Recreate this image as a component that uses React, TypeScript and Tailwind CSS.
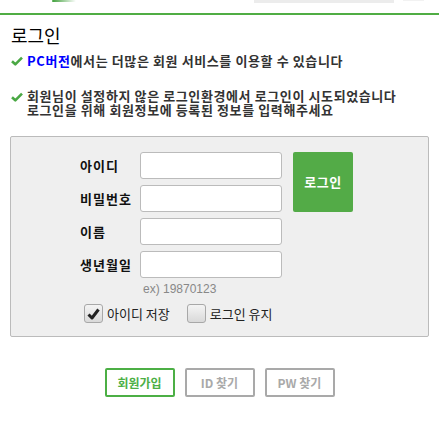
import React from "react";

const ko = "font-['Noto_Sans_CJK_KR','Noto_Sans',sans-serif]";

function GreenCheck() {
  return (
    <svg width="12" height="10" viewBox="0 0 12 10" className="shrink-0">
      <path d="M1 5.2 L4.3 8.3 L11 1.6" fill="none" stroke="#4aa844" strokeWidth="2.6" strokeLinejoin="round" />
    </svg>
  );
}

function Box({ checked, label }: { checked: boolean; label: string }) {
  return (
    <label className="flex items-center gap-[4px]">
      <span className="flex h-[19px] w-[19px] items-center justify-center rounded-[3px] border border-[#a8a8a8] bg-[linear-gradient(180deg,#f4f4f4,#d9d9d9)]">
        {checked && (
          <svg width="13" height="12" viewBox="0 0 13 12">
            <path d="M1.5 6.5 L5 10 L11.5 1.5" fill="none" stroke="#222" strokeWidth="3" strokeLinejoin="round" />
          </svg>
        )}
      </span>
      <span className={`${ko} text-[13px] leading-none text-[#222]`}>{label}</span>
    </label>
  );
}

function Field({ label }: { label: string }) {
  return (
    <div className="flex items-center">
      <span className={`${ko} w-[60px] text-[13px] font-bold tracking-[1px] text-[#111]`}>{label}</span>
      <input className="h-[27px] w-[142px] rounded-[3px] border border-[#bbb] bg-white outline-none" />
    </div>
  );
}

export default function App() {
  return (
    <div className={`h-[432px] w-[439px] overflow-hidden bg-white ${ko}`}>
      <div className="relative h-[13px]">
        <div className="absolute left-[52px] top-0 h-[2px] w-[24px] rounded-full bg-[linear-gradient(90deg,#3f9f3a,rgba(80,173,68,0))]" />
        <div className="absolute left-[254px] top-0 h-[3px] w-[140px] bg-[#ececec]" />
        <div className="absolute left-[403px] top-0 h-[1px] w-[21px] bg-[#f2f2f2]" />
      </div>
      <div className="h-[2px] bg-[#50ad44]" />

      <div className="px-[11px]">
        <h1 className="mt-[10px] text-[18px] font-normal leading-[20px] text-black">로그인</h1>

        <div className="mt-[9px] flex items-center gap-[4px] text-[13px] font-bold leading-[14px] tracking-[0.6px] text-[#333]">
          <GreenCheck />
          <p>
            <span className="text-[#0000ff]">PC버전</span>에서는 더많은 회원 서비스를 이용할 수 있습니다
          </p>
        </div>

        <div className="mt-[21px] flex items-start gap-[4px] text-[13px] font-bold leading-[14px] tracking-[0.6px] text-[#333]">
          <div className="pt-[3px]">
            <GreenCheck />
          </div>
          <p>
            회원님이 설정하지 않은 로그인환경에서 로그인이 시도되었습니다
            <br />
            로그인을 위해 회원정보에 등록된 정보를 입력해주세요
          </p>
        </div>
      </div>

      <div className="mx-[10px] mt-[19px] w-[419px] rounded-[2px] border border-[#bbb] bg-[#efefef] pb-[13px] pl-[69px] pt-[15px]">
        <div className="flex gap-[11px]">
          <div className="flex flex-col gap-[6px]">
            <Field label="아이디" />
            <Field label="비밀번호" />
            <Field label="이름" />
            <Field label="생년월일" />
          </div>
          <button className="h-[60px] w-[60px] rounded-[2px] bg-[#53ab47] text-[13px] font-bold tracking-[0.5px] text-white">
            로그인
          </button>
        </div>
        <p className="ml-[63px] mt-[3px] font-['Liberation_Sans',Arial,sans-serif] text-[12px] leading-[16px] text-[#888]">
          ex) 19870123
        </p>
        <div className="ml-[4px] mt-[7px] flex items-center gap-[17px]">
          <Box checked label="아이디 저장" />
          <Box checked={false} label="로그인 유지" />
        </div>
      </div>

      <div className="mt-[31px] flex justify-center gap-[10px]">
        <button className="h-[29px] w-[70px] rounded-[2px] border-2 border-[#4caf45] bg-white text-[12px] font-bold text-[#4caf45]">
          회원가입
        </button>
        <button className="h-[29px] w-[70px] rounded-[2px] border-2 border-[#a9a9a9] bg-white text-[12px] font-bold text-[#a9a9a9]">
          ID 찾기
        </button>
        <button className="h-[29px] w-[70px] rounded-[2px] border-2 border-[#a9a9a9] bg-white text-[12px] font-bold text-[#a9a9a9]">
          PW 찾기
        </button>
      </div>
    </div>
  );
}
